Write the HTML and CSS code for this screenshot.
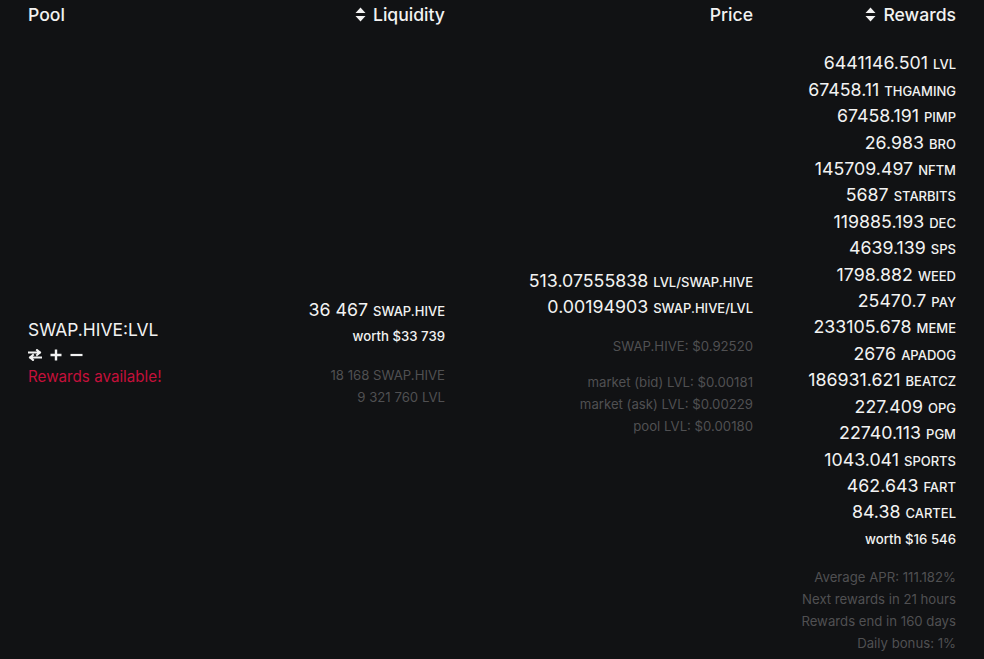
FILE: index.html
```html
<!DOCTYPE html>
<html>
<head>
<meta charset="utf-8">
<link rel="stylesheet" href="styles.css">
</head>
<body>
<table class="pools">
  <colgroup>
    <col class="c1"><col class="c2"><col class="c3"><col class="c4">
  </colgroup>
  <thead>
    <tr>
      <th class="left">Pool</th>
      <th class="right"><span class="sort"><svg width="11" height="15" viewBox="0 0 11 15"><path d="M5.5 0.5 L10.5 6 L0.5 6 Z M0.5 9 L10.5 9 L5.5 14.5 Z" fill="#f2f2f2"/></svg></span>Liquidity</th>
      <th class="right">Price</th>
      <th class="right"><span class="sort"><svg width="11" height="15" viewBox="0 0 11 15"><path d="M5.5 0.5 L10.5 6 L0.5 6 Z M0.5 9 L10.5 9 L5.5 14.5 Z" fill="#f2f2f2"/></svg></span>Rewards</th>
    </tr>
  </thead>
  <tbody>
    <tr>
      <td class="left">
        <div class="pname">SWAP.HIVE:LVL</div>
        <div class="actions">
          <svg width="14" height="12" viewBox="0 0 14 12"><path d="M1 3.5 H12 M9 1 L12 3.5 L9 6 M13 8.5 H2 M5 6 L2 8.5 L5 11" stroke="#f2f2f2" stroke-width="2" fill="none" stroke-linecap="square"/></svg>
          <svg width="12" height="12" viewBox="0 0 12 12"><path d="M6 0.5 V11.5 M0.5 6 H11.5" stroke="#f2f2f2" stroke-width="2.4" fill="none"/></svg>
          <svg width="13" height="12" viewBox="0 0 13 12"><path d="M0.5 6 H12.5" stroke="#f2f2f2" stroke-width="2.2" fill="none"/></svg>
        </div>
        <div class="avail">Rewards available!</div>
      </td>
      <td class="right">
        <div class="big">36 467 <span class="unit">SWAP.HIVE</span></div>
        <div class="worth">worth $33 739</div>
        <div class="muted first">18 168 SWAP.HIVE</div>
        <div class="muted">9 321 760 LVL</div>
      </td>
      <td class="right">
        <div class="big">513.07555838 <span class="unit">LVL/SWAP.HIVE</span></div>
        <div class="big">0.00194903 <span class="unit">SWAP.HIVE/LVL</span></div>
        <div class="muted first">SWAP.HIVE: $0.92520</div>
        <div class="muted first">market (bid) LVL: $0.00181</div>
        <div class="muted">market (ask) LVL: $0.00229</div>
        <div class="muted">pool LVL: $0.00180</div>
      </td>
      <td class="right">
        <div class="big">6441146.501 <span class="unit">LVL</span></div>
        <div class="big">67458.11 <span class="unit">THGAMING</span></div>
        <div class="big">67458.191 <span class="unit">PIMP</span></div>
        <div class="big">26.983 <span class="unit">BRO</span></div>
        <div class="big">145709.497 <span class="unit">NFTM</span></div>
        <div class="big">5687 <span class="unit">STARBITS</span></div>
        <div class="big">119885.193 <span class="unit">DEC</span></div>
        <div class="big">4639.139 <span class="unit">SPS</span></div>
        <div class="big">1798.882 <span class="unit">WEED</span></div>
        <div class="big">25470.7 <span class="unit">PAY</span></div>
        <div class="big">233105.678 <span class="unit">MEME</span></div>
        <div class="big">2676 <span class="unit">APADOG</span></div>
        <div class="big">186931.621 <span class="unit">BEATCZ</span></div>
        <div class="big">227.409 <span class="unit">OPG</span></div>
        <div class="big">22740.113 <span class="unit">PGM</span></div>
        <div class="big">1043.041 <span class="unit">SPORTS</span></div>
        <div class="big">462.643 <span class="unit">FART</span></div>
        <div class="big">84.38 <span class="unit">CARTEL</span></div>
        <div class="worth">worth $16 546</div>
        <div class="muted first">Average APR: 111.182%</div>
        <div class="muted">Next rewards in 21 hours</div>
        <div class="muted">Rewards end in 160 days</div>
        <div class="muted">Daily bonus: 1%</div>
      </td>
    </tr>
  </tbody>
</table>
</body>
</html>
```
FILE: styles.css
```css
html, body {
  margin: 0;
  padding: 0;
  background: #111214;
}
body {
  padding: 0 16px;
  font-family: Inter, "Noto Sans", sans-serif;
  color: #f2f2f2;
  overflow: hidden;
}
.pools {
  width: 952px;
  border-collapse: collapse;
  table-layout: fixed;
}
.c1 { width: 220px; }
.c2 { width: 221px; }
.c3 { width: 308px; }
.c4 { width: 203px; }
th {
  font-size: 17.6px;
  font-weight: 500;
  line-height: 26.4px;
  padding: 2px 12px 22px;
  vertical-align: top;
}
.left { text-align: left; }
.right { text-align: right; }
.sort {
  display: inline-block;
  vertical-align: -1px;
  margin-right: 7px;
  line-height: 1;
}
.sort svg { display: block; }
td {
  padding: 0 12px;
  vertical-align: middle;
}
.pname {
  font-size: 17.4px;
  line-height: 26.4px;
}
.actions {
  display: flex;
  align-items: center;
  gap: 8px;
  height: 23px;
}
.actions svg { display: block; }
.avail {
  color: #c4103a;
  font-size: 15.2px;
  line-height: 21px;
}
.big {
  font-size: 17.8px;
  line-height: 26.4px;
  white-space: nowrap;
}
.unit {
  font-size: 13px;
  font-weight: 500;
  line-height: 1;
}
.worth {
  font-size: 13.2px;
  font-weight: 500;
  line-height: 26.4px;
}
.muted {
  color: #505052;
  font-size: 13.2px;
  line-height: 22px;
  white-space: nowrap;
}
.muted.first { margin-top: 14px; }
```
